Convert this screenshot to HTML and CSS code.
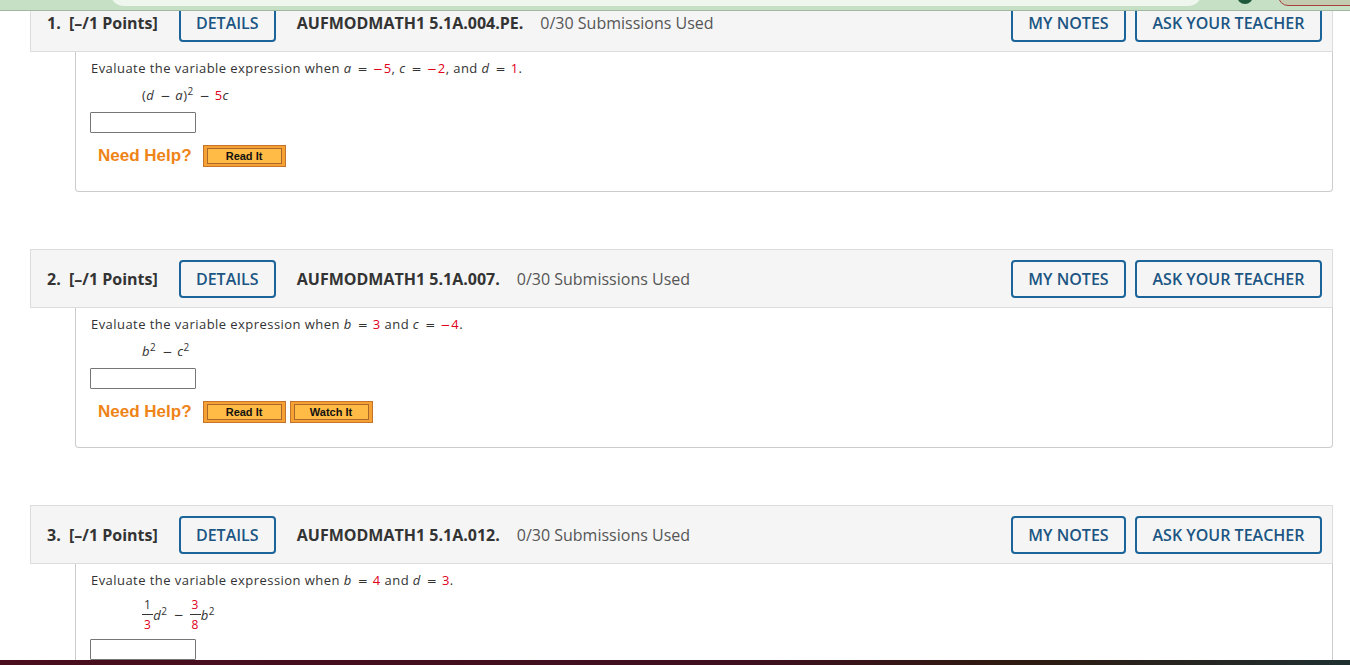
FILE: index.html
```html
<!DOCTYPE html>
<html>
<head>
<meta charset="utf-8">
<link rel="stylesheet" href="styles.css">
</head>
<body>
<div class="topbar">
  <div class="topbar-panel"></div>
  <div class="topbar-dot"></div>
  <div class="topbar-pill"></div>
</div>

<div class="page">
  <section class="question first">
    <header class="qhead">
      <span class="qnum">1.&nbsp; [–/1 Points]</span>
      <button class="obtn details">DETAILS</button>
      <span class="qid">AUFMODMATH1 5.1A.004.PE.</span>
      <span class="subs">0/30 Submissions Used</span>
      <span class="spacer"></span>
      <button class="obtn notes">MY NOTES</button>
      <button class="obtn ask">ASK YOUR TEACHER</button>
    </header>
    <div class="qbody">
      <p class="prompt">Evaluate the variable expression when <i>a</i><span class="op">=</span><span class="n"><span class="m">−</span>5</span>, <i>c</i><span class="op">=</span><span class="n"><span class="m">−</span>2</span>, and <i>d</i><span class="op">=</span><span class="n">1</span>.</p>
      <p class="expr">(<i>d</i><span class="op">−</span><i>a</i>)<sup>2</sup><span class="op">−</span><span class="n">5</span><i>c</i></p>
      <input class="answer" type="text">
      <div class="help">
        <span class="help-label">Need Help?</span>
        <span class="hbtn"><span>Read It</span></span>
      </div>
    </div>
  </section>

  <section class="question">
    <header class="qhead">
      <span class="qnum">2.&nbsp; [–/1 Points]</span>
      <button class="obtn details">DETAILS</button>
      <span class="qid">AUFMODMATH1 5.1A.007.</span>
      <span class="subs">0/30 Submissions Used</span>
      <span class="spacer"></span>
      <button class="obtn notes">MY NOTES</button>
      <button class="obtn ask">ASK YOUR TEACHER</button>
    </header>
    <div class="qbody">
      <p class="prompt">Evaluate the variable expression when <i>b</i><span class="op">=</span><span class="n">3</span> and <i>c</i><span class="op">=</span><span class="n"><span class="m">−</span>4</span>.</p>
      <p class="expr"><i>b</i><sup>2</sup><span class="op">−</span><i>c</i><sup>2</sup></p>
      <input class="answer" type="text">
      <div class="help">
        <span class="help-label">Need Help?</span>
        <span class="hbtn"><span>Read It</span></span>
        <span class="hbtn"><span>Watch It</span></span>
      </div>
    </div>
  </section>

  <section class="question">
    <header class="qhead">
      <span class="qnum">3.&nbsp; [–/1 Points]</span>
      <button class="obtn details">DETAILS</button>
      <span class="qid">AUFMODMATH1 5.1A.012.</span>
      <span class="subs">0/30 Submissions Used</span>
      <span class="spacer"></span>
      <button class="obtn notes">MY NOTES</button>
      <button class="obtn ask">ASK YOUR TEACHER</button>
    </header>
    <div class="qbody open">
      <p class="prompt">Evaluate the variable expression when <i>b</i><span class="op">=</span><span class="n">4</span> and <i>d</i><span class="op">=</span><span class="n">3</span>.</p>
      <div class="expr frac-expr">
        <span class="frac"><span class="num">1</span><span class="den n">3</span></span>
        <span class="term"><i>d</i><sup>2</sup></span>
        <span class="op">−</span>
        <span class="frac"><span class="num n">3</span><span class="den n">8</span></span>
        <span class="term"><i>b</i><sup>2</sup></span>
      </div>
      <input class="answer" type="text">
    </div>
  </section>
</div>

<div class="bottombar"></div>
</body>
</html>
```

FILE: styles.css
```css
* { box-sizing: border-box; }

html, body {
  margin: 0;
  padding: 0;
  background: #ffffff;
  height: 665px;
  overflow: hidden;
}

body {
  font-family: "Open Sans", "Liberation Sans", sans-serif;
  color: #333;
}

.topbar {
  position: fixed;
  top: 0;
  left: 0;
  width: 1350px;
  height: 11px;
  background: #c6e0c6;
  border-bottom: 1px solid #9fb89f;
  z-index: 10;
  overflow: hidden;
}

.topbar-panel {
  position: absolute;
  left: 110px;
  top: -10px;
  width: 1092px;
  height: 16px;
  background: #eef6ee;
  border-radius: 0 0 14px 14px;
}

.topbar-dot {
  position: absolute;
  left: 1237px;
  top: -12px;
  width: 16px;
  height: 16px;
  border-radius: 50%;
  background: #1f5a3c;
}

.topbar-pill {
  position: absolute;
  left: 1278px;
  top: -14px;
  width: 100px;
  height: 20px;
  border-radius: 10px;
  background: #c3cbb1;
  border: 1px solid #a8403a;
}

.page {
  padding-left: 30px;
  width: 1333px;
}

.question { margin-bottom: 57px; }
.question.first { margin-top: -7px; }

.qhead {
  display: flex;
  align-items: center;
  height: 59px;
  background: #f5f5f5;
  border: 1px solid #dcdcdc;
  padding: 0 10px 0 16px;
  font-size: 16px;
}

.qnum {
  font-weight: 700;
  color: #333;
  margin-right: 21px;
}

.obtn {
  font-family: "Open Sans", "Liberation Sans", sans-serif;
  font-size: 16px;
  font-weight: 600;
  color: #1c5583;
  background: #f5f5f5;
  border: 2px solid #1a6499;
  border-radius: 4px;
  height: 38px;
  padding: 0 10px;
  margin: 0;
}

.details { width: 97px; margin-right: 21px; }
.notes { width: 115px; margin-right: 9px; }
.ask { width: 187px; }

.qid {
  font-weight: 700;
  color: #333;
  margin-right: 17px;
}

.subs { color: #555; }

.spacer { flex: 1; }

.qbody {
  margin-left: 45px;
  height: 140px;
  border: 1px solid #cccccc;
  border-top: none;
  border-radius: 0 0 4px 4px;
  padding: 6px 15px 0 14px;
  font-size: 13px;
  color: #333;
}

.qbody.open {
  height: 200px;
  border-bottom: none;
}

.prompt {
  margin: 0;
  padding-left: 1px;
  height: 20px;
  line-height: 20px;
  letter-spacing: 0.45px;
}

.op {
  margin: 0 5px 0 6px;
  font-family: "DejaVu Sans", sans-serif;
  font-size: 12px;
  line-height: 1;
  letter-spacing: 0;
}

.m {
  font-family: "DejaVu Sans", sans-serif;
  font-size: 12px;
  line-height: 1;
  letter-spacing: 0;
  margin-right: 1px;
}

.n { color: #e0001a; }

.expr {
  margin: 7px 0 7px 52px;
  height: 20px;
  line-height: 20px;
  letter-spacing: 0.45px;
}

sup {
  font-size: 10px;
  vertical-align: 5px;
  line-height: 0;
}

.answer {
  display: block;
  width: 106px;
  height: 21px;
  border: 1px solid #767676;
  border-radius: 1px;
  margin: 0;
  padding: 0;
  background: #fff;
}

.help {
  display: flex;
  align-items: center;
  gap: 4px;
  margin-top: 12px;
  padding-left: 8px;
}

.help-label {
  font-family: "Liberation Sans", Arial, sans-serif;
  font-weight: 700;
  font-size: 17px;
  color: #ee8417;
  margin-right: 7px;
}

.hbtn {
  display: inline-flex;
  width: 83px;
  height: 22px;
  padding: 2px 3px;
  background: #f7a034;
  border: 1px solid #c27428;
}

.hbtn span {
  flex: 1;
  display: flex;
  align-items: center;
  justify-content: center;
  background: #ffbb45;
  border: 1px solid #a8692a;
  font-family: "Liberation Sans", Arial, sans-serif;
  font-weight: 700;
  font-size: 11px;
  color: #111;
}

.frac-expr {
  display: flex;
  align-items: center;
  height: auto;
  margin-top: 8px;
  margin-bottom: 8px;
  line-height: 1;
}

.frac {
  display: inline-flex;
  flex-direction: column;
  align-items: center;
  font-size: 12px;
}

.frac .num {
  padding: 0 2px 3px;
  border-bottom: 1px solid #333;
  line-height: 13px;
}

.frac .den {
  padding-top: 3px;
  line-height: 13px;
}

.term { line-height: 20px; }
.frac-expr .op { margin: 0 6px; }

.bottombar {
  position: fixed;
  left: 0;
  bottom: 0;
  width: 1350px;
  height: 5px;
  background: linear-gradient(90deg, #4a0e1e 0%, #3e0f1f 55%, #2e1a10 75%, #1f2f30 100%);
  z-index: 10;
}
```
